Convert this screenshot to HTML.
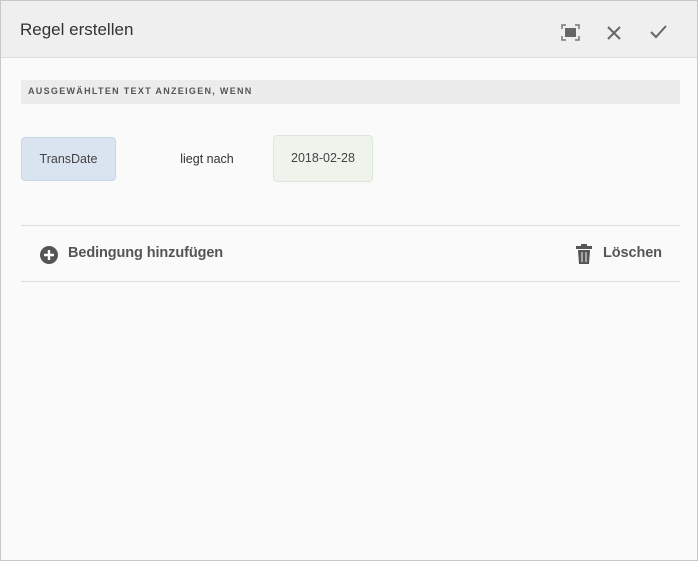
<!DOCTYPE html>
<html><head><style>
*{margin:0;padding:0;box-sizing:border-box}
body{width:698px;height:561px;background:#fff;font-family:"Liberation Sans",sans-serif;overflow:hidden}
.win{position:absolute;left:0;top:0;width:698px;height:561px;border:1px solid #c8c8c8;background:#fafafa}
.hdr{position:absolute;left:0;top:0;width:696px;height:57px;background:#efefef;border-bottom:1px solid #ddd}
.title{position:absolute;left:19px;top:19px;font-size:17px;color:#333}
.bar{position:absolute;left:20px;top:79px;width:659px;height:24px;background:#ececec;font-size:9px;font-weight:bold;letter-spacing:1.3px;color:#555;padding:6px 0 0 7px}
.box{position:absolute;border-radius:4px;font-size:12.5px;color:#444;text-align:center}
.line{position:absolute;left:20px;width:659px;height:1px;background:#ddd}
.act{position:absolute;top:244px;font-size:14.5px;font-weight:bold;color:#555;letter-spacing:-0.1px}
</style></head><body>
<div class="win">
<div class="hdr">
<div class="title">Regel erstellen</div>
<svg style="position:absolute;left:560px;top:23px" width="19" height="17" viewBox="0 0 19 17">
<path d="M1 5V1h4M14 1h4v4M18 12v4h-4M5 16H1v-4" fill="none" stroke="#777" stroke-width="1.5"/>
<rect x="4" y="4" width="11" height="9" fill="#666"/></svg>
<svg style="position:absolute;left:606px;top:25px" width="14" height="14" viewBox="0 0 14 14"><path d="M1 1L13 13M13 1L1 13" stroke="#666" stroke-width="2"/></svg>
<svg style="position:absolute;left:649px;top:24px" width="17" height="14" viewBox="0 0 17 14"><path d="M1 7L6 12L16 1" fill="none" stroke="#666" stroke-width="2"/></svg>
</div>
<div class="bar">AUSGEWÄHLTEN TEXT ANZEIGEN, WENN</div>
<div class="box" style="left:20px;top:136px;width:95px;height:44px;background:#dae4f1;border:1px solid #c9d6e8;line-height:42px">TransDate</div>
<div class="box" style="left:170px;top:136px;width:72px;height:44px;line-height:44px;color:#333">liegt nach</div>
<div class="box" style="left:272px;top:134px;width:100px;height:47px;background:#eef4ec;border:1px solid #dde6da;line-height:44px">2018-02-28</div>
<div class="line" style="top:224px"></div>
<div class="line" style="top:280px"></div>
<svg style="position:absolute;left:39px;top:245px" width="18" height="18" viewBox="0 0 18 18"><circle cx="9" cy="9" r="9" fill="#555"/><path d="M9 4v10M4 9h10" stroke="#fff" stroke-width="2.4"/></svg>
<div class="act" style="left:67px">Bedingung hinzufügen</div>
<svg style="position:absolute;left:574px;top:243px" width="18" height="20" viewBox="0 0 18 20"><rect x="1" y="2" width="16" height="3" fill="#555"/><rect x="6" y="0" width="6" height="3" fill="#555"/><path d="M3 6h12l-1 14H4z" fill="#555"/><path d="M7 8v10M11 8v10" stroke="#fafafa" stroke-width="1"/></svg>
<div class="act" style="left:602px">Löschen</div>
</div>
</body></html>
